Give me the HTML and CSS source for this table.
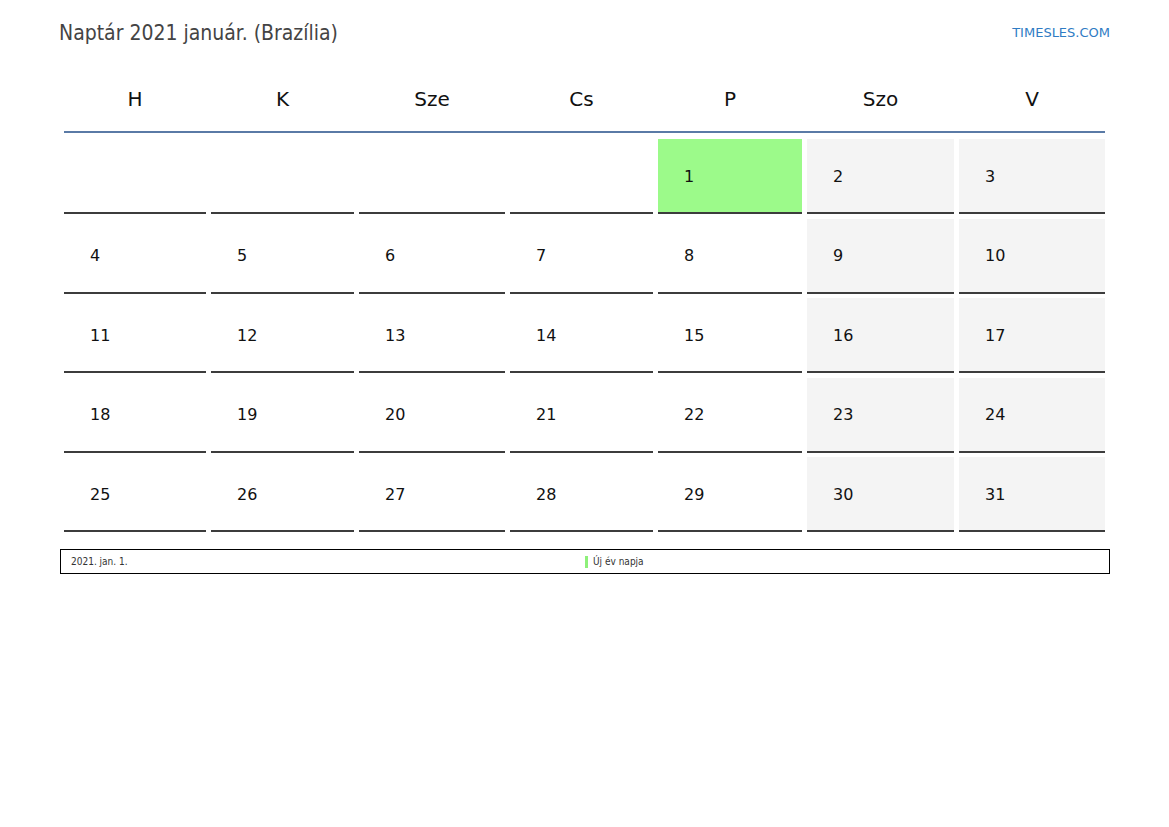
FILE: index.html
```html
<!DOCTYPE html>
<html lang="hu">
<head>
<meta charset="utf-8">
<title>Naptár 2021 január (Brazília)</title>
<link rel="stylesheet" href="styles.css">
</head>
<body>
<div class="page">
  <header class="top">
    <h1 class="title">Naptár 2021 január. (Brazília)</h1>
    <a class="brand" href="#">TIMESLES.COM</a>
  </header>
  <section class="calendar">
    <div class="weekdays">
      <div>H</div><div>K</div><div>Sze</div><div>Cs</div><div>P</div><div>Szo</div><div>V</div>
    </div>
    <div class="days">
      <div class="day"></div><div class="day"></div><div class="day"></div><div class="day"></div>
      <div class="day holiday">1</div><div class="day weekend">2</div><div class="day weekend">3</div>
      <div class="day">4</div><div class="day">5</div><div class="day">6</div><div class="day">7</div>
      <div class="day">8</div><div class="day weekend">9</div><div class="day weekend">10</div>
      <div class="day">11</div><div class="day">12</div><div class="day">13</div><div class="day">14</div>
      <div class="day">15</div><div class="day weekend">16</div><div class="day weekend">17</div>
      <div class="day">18</div><div class="day">19</div><div class="day">20</div><div class="day">21</div>
      <div class="day">22</div><div class="day weekend">23</div><div class="day weekend">24</div>
      <div class="day">25</div><div class="day">26</div><div class="day">27</div><div class="day">28</div>
      <div class="day">29</div><div class="day weekend">30</div><div class="day weekend">31</div>
    </div>
  </section>
  <footer class="legend">
    <div class="legend-col">2021. jan. 1.</div>
    <div class="legend-col"><span class="mark"></span>Új év napja</div>
  </footer>
</div>
</body>
</html>
```
FILE: styles.css
```css
html, body {
  margin: 0;
  padding: 0;
  background: #fff;
}
body {
  font-family: "DejaVu Sans", "Liberation Sans", sans-serif;
  color: #000;
}
.page {
  width: 1169px;
}
.top {
  display: flex;
  justify-content: space-between;
  align-items: center;
  padding: 20px 59px 0 59px;
  height: 26px;
}
.title {
  margin: 0;
  font-family: "DejaVu Sans Condensed", "DejaVu Sans", sans-serif;
  font-stretch: condensed;
  font-size: 21px;
  font-weight: normal;
  color: #444;
  line-height: 26px;
}
.brand {
  font-size: 13px;
  color: #2f7cc4;
  text-decoration: none;
  line-height: 26px;
}
.calendar {
  margin: 0 64px;
}
.weekdays {
  display: grid;
  grid-template-columns: 142px 143px 146px 143px 144px 147px 146px;
  column-gap: 5px;
  height: 65px;
  margin-top: 20px;
  border-bottom: 2px solid #5a7aa6;
  align-items: center;
  text-align: center;
  font-size: 20px;
  color: #111;
}
.weekdays div {
  padding-top: 1px;
}
.days {
  display: grid;
  grid-template-columns: 142px 143px 146px 143px 144px 147px 146px;
  column-gap: 5px;
  row-gap: 4.5px;
  grid-auto-rows: 75px;
  margin-top: 6px;
}
.day {
  box-sizing: border-box;
  display: flex;
  align-items: center;
  padding-left: 26px;
  padding-top: 1px;
  font-size: 16px;
  color: #111;
  border-bottom: 2px solid #3c3c3c;
}
.weekend {
  background: #f4f4f4;
}
.holiday {
  background: #9cfa8a;
}
.legend {
  display: grid;
  grid-template-columns: 1fr 1fr;
  box-sizing: border-box;
  width: 1050px;
  height: 25px;
  margin: 17px 0 0 60px;
  border: 1px solid #000;
  font-family: "DejaVu Sans Condensed", "DejaVu Sans", sans-serif;
  font-stretch: condensed;
  font-size: 10px;
  color: #333;
  align-items: center;
}
.legend-col {
  display: flex;
  align-items: center;
  padding-left: 10px;
}
.legend-col + .legend-col {
  padding-left: 0;
}
.mark {
  display: inline-block;
  width: 3px;
  height: 12px;
  background: #8ef07a;
  margin-right: 5px;
}
```
